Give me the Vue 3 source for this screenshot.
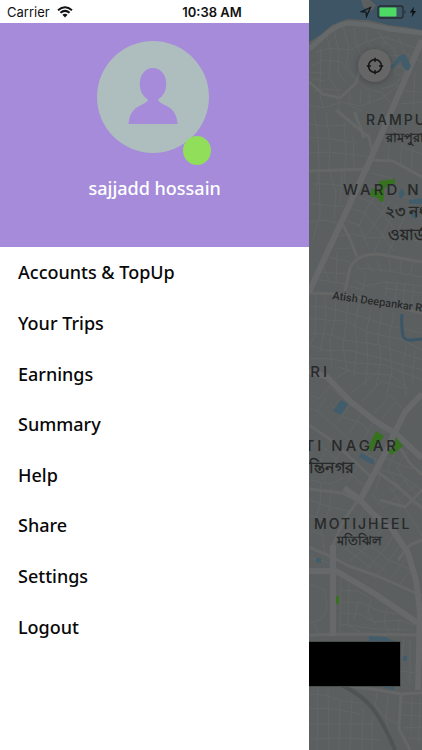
<script setup>
const user = { name: 'sajjadd hossain' }

const menu = ['Accounts & TopUp', 'Your Trips', 'Earnings', 'Summary', 'Help', 'Share', 'Settings', 'Logout']

const highways = [
  'M422 40 L371 158 L309 292',
  'M309 371 L327 377 L350 401 L375 421 L395 433 L422 458',
  'M422 394 L405 412 L395 432 L388 448 L360 500',
  'M344 488 L359 499 L372 513 L392 529 L408 553 L416 580 L420 612',
  'M333 545 L333 636',
  'M309 571 L336 571 L375 594 L422 626',
  'M420 612 L418 690'
]

const roads = [
  'M372 160 L393 161 L422 177',
  'M309 425 L331 440 L352 459 L371 477',
  'M359 499 L344 520 L333 545',
  'M340 685 L372 689 L401 694 L422 693',
  'M401 694 L399 729 L410 750',
  'M309 171 L337 170 L370 169',
  'M309 293 L336 294 L362 298 L422 313',
  'M345 291 L350 268 Q356 254 378 254 L422 262',
  'M336 110 L360 130 L369 137 L373 155',
  'M357 120 L355 113 L364 138',
  'M342 223 L350 239 L357 257',
  'M309 82 L323 94 L340 98 L356 83 L360 70',
  'M309 547 L332 557 L349 566 L380 577 L422 596',
  'M309 635 L350 634 L417 635',
  'M309 489 L342 493 L370 507',
  'M375 470 L398 487 L422 508',
  'M380 500 L405 507 L422 490',
  'M398 560 L410 545 L422 540',
  'M395 440 L409 462 L422 475'
]

const streets = [
  'M316 52 L330 48 L350 50 L366 42 L384 37 L400 42 L422 51',
  'M311 66 L324 60 L342 62 L348 72 L366 88 L382 93 L392 104',
  'M326 34 L331 52 L329 77 L338 92 L340 115',
  'M334 30 L339 53 L338 73 L347 83',
  'M343 26 L349 48 L346 65 L354 76',
  'M354 27 L356 43 L363 61',
  'M366 28 L367 41 L377 54 L400 56 L411 74',
  'M377 30 L385 42 L393 48 L399 61',
  'M389 35 L382 48 L370 51',
  'M399 38 L405 54 L422 62',
  'M309 72 L325 73 M309 78 L325 81 M313 92 L326 89 L341 90',
  'M309 105 L323 108 L342 102 L360 106 L382 98 L401 84',
  'M321 47 L320 94 L323 108',
  'M350 86 L349 105 L362 111',
  'M361 89 L360 104 M369 91 L370 105',
  'M387 61 L405 70 L397 84 L382 89',
  'M405 55 L394 72 L405 79',
  'M415 71 L413 110 M422 92 L404 91 M422 102 L399 104',
  'M314 114 L318 136 L319 168 L316 190',
  'M326 112 L330 144 L329 169 L336 192 L334 221',
  'M309 124 L325 126 L348 125 M309 137 L331 139 L357 143',
  'M309 153 L328 152 L359 155 L371 157',
  'M344 121 L346 153 L344 181 L350 193',
  'M353 136 L354 169',
  'M309 184 L330 184 L349 187 M309 203 L334 206 L344 206',
  'M319 170 L320 214 L313 239 M342 171 L340 204',
  'M309 222 L325 220 L337 223',
  'M376 122 L391 125 L399 139 L422 143',
  'M380 133 L389 147 L388 161 M393 128 L405 148 L422 154',
  'M402 143 L400 165 M413 146 L411 170',
  'M371 173 L391 178 L397 194 L422 202',
  'M362 183 L383 191 L383 205 L400 219',
  'M355 196 L371 202 L384 215 L401 239',
  'M350 208 L365 213 L378 230 L394 251',
  'M344 220 L359 225 L369 249',
  'M378 192 L367 207 L359 226 M390 201 L376 222 L363 240',
  'M397 205 L387 226 L374 252 M411 203 L398 231 L388 254',
  'M339 236 L352 234 L371 238 L398 236 L422 242',
  'M335 249 L351 248 M329 257 L350 262 M320 272 L349 274',
  'M323 265 L330 283 M337 251 L336 283 M316 279 L349 285',
  'M357 266 L366 274 L363 290 L345 285',
  'M355 281 L365 286 L385 282 L422 286',
  'M367 263 L373 273 M377 260 L382 273 M389 259 L391 272 M401 260 L401 273 M413 262 L410 275',
  'M360 268 Q377 269 394 272 L422 277',
  'M384 288 L422 293 M388 281 L385 296 M397 282 L395 300 M405 283 L403 304 M414 284 L412 306',
  'M309 306 L325 307 L356 315 L390 326 L422 333',
  'M309 318 L326 320 L345 321 L370 333 L401 339 L422 350',
  'M316 295 L315 335 L309 348 M325 297 L326 321 L320 352',
  'M336 299 L335 319 L330 340 L332 368',
  'M348 301 L346 323 L343 346 L347 371',
  'M359 304 L355 325 L357 347 L354 378',
  'M371 308 L366 334 L368 361 L365 386',
  'M382 310 L378 336 L381 357 L376 387',
  'M394 313 L389 337 L392 372 L386 398',
  'M407 346 L402 367 L406 397 M415 351 L412 382',
  'M309 333 L329 334 L345 340 L379 345 L422 360',
  'M309 345 L328 351 L346 350 L369 355 L422 370',
  'M309 358 L330 359 L355 363 L384 365 L422 380',
  'M338 367 L357 373 L391 375 L409 390',
  'M335 379 L350 369 M351 393 L377 372 M361 402 L382 381 L402 388',
  'M331 388 L351 405 L370 420 L386 433',
  'M327 396 L317 411 L309 408 M317 411 L334 425 L358 448 L378 461',
  'M330 403 L344 417 L361 423 L378 441',
  'M350 405 L338 421 M361 414 L349 434 M372 424 L361 445',
  'M374 413 L391 395 L404 410 M382 418 L397 401',
  'M309 394 L319 399 L334 381 M309 439 L326 449 L320 462 L309 468',
  'M326 449 L343 468 L364 485 M342 449 L333 466 L321 480',
  'M358 466 L347 482 M369 456 L382 468 L376 490',
  'M398 445 L388 468 L397 485 M407 451 L397 467 L408 486',
  'M386 458 L404 466 L422 471 M382 470 L402 476 L422 490',
  'M309 480 L331 484 L343 478 M309 500 L334 508 L350 511',
  'M309 515 L324 520 L341 520 M321 482 L320 505 L314 525',
  'M332 487 L329 509 L321 532 L325 552',
  'M366 505 L357 524 L341 536 M375 513 L366 532 L343 551',
  'M386 523 L375 540 L349 561 M395 533 L385 549 L363 572',
  'M402 542 L390 559 L374 578 M408 554 L396 572 L386 583',
  'M412 569 L400 584 M347 530 L369 544 L389 560 L414 571',
  'M343 539 L365 554 L386 572 M346 549 L371 568',
  'M371 493 L383 508 L395 498 L403 507 L391 520',
  'M389 486 L403 505 L417 527 L422 536',
  'M397 484 L415 506 M405 481 L422 501 M391 492 L409 478 M398 501 L417 484',
  'M310 530 L325 536 M310 558 L325 561 L334 569',
  'M310 584 L325 590 L327 608 Q324 623 309 622',
  'M341 575 L340 633 M349 583 L348 625 L362 633',
  'M340 590 L358 591 L371 599 M340 602 L362 603 L380 611 L398 614',
  'M341 613 L359 614 L374 622 L401 620 L414 626',
  'M341 624 L376 629 L413 630 M371 599 L368 612 L376 625',
  'M387 608 L384 622 L390 634 M399 619 L398 633',
  'M358 602 L354 620 M314 623 L318 635',
  'M309 694 L325 695 L342 701 L362 703 M309 708 L333 709 L360 714',
  'M309 724 L337 724 L374 724 M309 739 L342 738 L380 740',
  'M318 687 L317 750 M328 689 L329 750 M340 699 L339 750',
  'M352 697 L350 750 M363 707 L362 750 M372 717 L372 750',
  'M377 693 L375 706 L386 718 L400 725 M388 695 L386 718 L394 750',
  'M403 702 L422 704 M401 715 L422 716 M403 728 L422 727 M409 738 L422 739',
  'M412 697 L411 732 M420 697 L419 745',
  'M404 638 L402 657 M410 638 L410 684 M401 671 L415 673'
]
</script>

<template>
  <div class="app">
    <header class="status">
      <div class="status-left">
        <span>Carrier</span>
        <svg class="wifi" viewBox="0 0 16 12" aria-hidden="true">
          <path d="M1 4.2Q8-1.6 15 4.2" />
          <path d="M3.4 6.8Q8 3 12.6 6.8" />
          <path class="solid" d="M5.4 8.8Q8 6.7 10.6 8.8L8 11.6Z" />
        </svg>
      </div>
      <time>10:38 AM</time>
      <div class="status-right">
        <svg class="arrow" viewBox="0 0 12 12" aria-hidden="true"><path d="M1.5 5.7L10.4 1.5L6.5 10.5L6 6.2Z" /></svg>
        <svg class="battery" viewBox="0 0 30 14" aria-hidden="true">
          <rect class="shell" x="1" y="1" width="25" height="12" rx="2.5" />
          <rect class="charge" x="2.5" y="2.5" width="17" height="9" rx="1" />
          <path class="tip" d="M27.5 5Q29.5 7 27.5 9Z" />
        </svg>
        <svg class="bolt" viewBox="0 0 8 12" aria-hidden="true"><path d="M5 .8L.8 6.5H3.5L2.6 11.2L7.2 5H4.4Z" /></svg>
      </div>
    </header>

    <aside class="drawer">
      <section class="profile">
        <div class="avatar">
          <svg viewBox="0 0 112 112" aria-hidden="true">
            <circle class="disc" cx="56" cy="56" r="56" />
            <path class="person" d="M56 27C64 27 69.200 34 69.200 43C69.200 50 66 55.500 61 58.500C61 61 66 63 70.500 65.500C78 69.500 80 76 80.500 83H31.500C32 76 34 69.500 41.500 65.500C46 63 51 61 51 58.500C46 55.500 42.800 50 42.800 43C42.800 34 48 27 56 27Z" />
          </svg>
          <span class="presence"></span>
        </div>
        <h1>{{ user.name }}</h1>
      </section>
      <nav class="menu">
        <a v-for="item in menu" :key="item" href="#">{{ item }}</a>
      </nav>
    </aside>

    <main class="map">
      <svg class="tiles" viewBox="309 0 113 750" preserveAspectRatio="xMinYMin slice">
        <rect class="land" x="309" y="0" width="600" height="1200" />
        <g class="streets"><path v-for="d in streets" :key="d" :d="d" /></g>
        <g class="roads"><path v-for="d in roads" :key="d" :d="d" /></g>
        <g class="highways"><path v-for="d in highways" :key="d" :d="d" /></g>
        <path class="rail" d="M341 685Q365 696 376 713T395 750" />
        <path class="water" d="M309 0H422V30L405 27L389 25L369 20L347 19L332 25L320 35L309 42Z" />
        <path class="land" d="M361 0H370L376 5L373 10L369 11L363 7Z" />
        <path class="shore" d="M309 49L322 38Q336 24 349 23L370 25L389 29L422 33" />
        <path class="lake" d="M391 66L399 56L405 54L408 60L411 66L408 71L404 68L401 61L397 65L391 69Z" />
        <path class="lake" d="M402 188L405 194L401 199L398 194ZM409 200L422 198V204H409ZM411 211L417 213L416 219L411 216Z" />
        <path class="canal" d="M402 314Q401 326 403 336Q405 341 412 340L422 339" />
        <path class="lake" d="M341 400L348 404L341 415L333 411ZM361 453L374 460V465L359 457ZM316 558H321V563L316 562ZM369 636L385 637L397 642H369ZM403 656H407V661H403ZM384 685H394V690L385 688Z" />
        <path class="park" d="M379 181L395 179V184L389 185L384 189V201L380 202L378 198L370 196L372 188L380 190Z" />
        <path class="park" d="M376 431L384 436L379 443L375 445L371 452L368 447ZM396 437L403 446L397 451L391 455L388 451L394 447ZM336 596H339V604H336Z" />
        <g class="labels">
          <text class="district" x="366" y="125">RAMPURA</text>
          <text class="bangla" x="386" y="142">রামপুরা</text>
          <text class="area" x="343" y="195">WARD NO</text>
          <text class="bangla big" x="385" y="217">২৩ নং</text>
          <text class="bangla big" x="388" y="240">ওয়ার্ড</text>
          <text class="road-name" x="332" y="299" transform="rotate(8 332 299)">Atish Deepankar Rd</text>
          <text class="area" x="330" y="377" text-anchor="end">GORI</text>
          <text class="area" x="399" y="451" text-anchor="end">SHANTI NAGAR</text>
          <text class="bangla big" x="354" y="473" text-anchor="end">শান্তিনগর</text>
          <text class="district" x="314" y="529">MOTIJHEEL</text>
          <text class="bangla" x="337" y="545">মতিঝিল</text>
        </g>
      </svg>
      <button class="locate" type="button" aria-label="Center on my location">
        <svg viewBox="0 0 18 18" aria-hidden="true">
          <circle cx="9" cy="9" r="6.500" />
          <path d="M9 .8V5M9 13V17.200M.8 9H5M13 9H17.200" />
        </svg>
      </button>
      <div class="action-bar"></div>
    </main>
  </div>
</template>

<style>
body {
  margin: 0;
}
</style>

<style scoped>
.app {
  position: relative;
  display: flex;
  min-height: 100vh;
  overflow: hidden;
  background: #fff;
  font-family: "Noto Sans", "Open Sans", sans-serif;
}

.status {
  position: absolute;
  z-index: 2;
  inset: 0 0 auto;
  display: grid;
  grid-template-columns: 1fr auto 1fr;
  align-items: center;
  height: 24px;
  padding: 0 5px 0 7px;
  color: #111;
  font: 500 13px/24px Inter, sans-serif;
}

.status time {
  font-weight: 600;
}

.status-left,
.status-right {
  display: flex;
  align-items: center;
  gap: 7px;
}

.status-left {
  font-weight: 400;
}

.status-right {
  justify-content: flex-end;
  gap: 5px;
}

.wifi {
  width: 16px;
  height: 12px;
  fill: none;
  stroke: #111;
  stroke-width: 2;
}

.wifi .solid {
  fill: #111;
  stroke: none;
}

.arrow {
  width: 12px;
  height: 12px;
  fill: none;
  stroke: #15191b;
  stroke-width: 1.3;
}

.battery {
  width: 30px;
  height: 14px;
}

.shell {
  fill: none;
  stroke: #252d33;
  stroke-width: 1.3;
}

.charge {
  fill: #4cd964;
}

.tip {
  fill: #252d33;
}

.bolt {
  width: 8px;
  height: 12px;
  margin-left: -3px;
  fill: #101316;
}

.drawer {
  flex: 0 0 73.3%;
  box-sizing: border-box;
  padding-top: 23px;
  background: #fff;
}

.profile {
  display: flex;
  flex-direction: column;
  align-items: center;
  box-sizing: border-box;
  min-height: 224px;
  padding: 18px 4px 0 0;
  background: #a58bda;
}

.avatar {
  position: relative;
  width: 112px;
  height: 112px;
}

.avatar svg {
  display: block;
}

.disc {
  fill: #aebdbd;
}

.person {
  fill: #a58bda;
}

.presence {
  position: absolute;
  right: -2px;
  bottom: -12px;
  width: 28px;
  height: 29px;
  border-radius: 50%;
  background: #90de5a;
}

h1 {
  margin: 23px 0 0 4px;
  color: #fff;
  font-size: 18px;
  font-weight: 500;
  line-height: 24px;
}

.menu {
  display: grid;
  grid-auto-rows: 1fr;
  min-height: 405px;
}

.menu a {
  display: flex;
  align-items: center;
  padding: 0 18px;
  color: #080808;
  font-size: 18px;
  font-weight: 500;
  text-decoration: none;
}

.map {
  position: relative;
  flex: 1;
  min-width: 0;
  background: #5b5f5f;
}

.tiles {
  position: absolute;
  width: 100%;
  height: 100%;
}

.land {
  fill: #5b5f5f;
}

.water {
  fill: #3d5564;
}

.lake {
  fill: #415d6c;
}

.park {
  fill: #36721f;
}

.canal {
  fill: none;
  stroke: #3b5666;
  stroke-width: 3;
}

.streets,
.roads,
.highways,
.shore,
.rail {
  fill: none;
  stroke: #636666;
  stroke-linejoin: round;
}

.streets {
  stroke-width: 1;
}

.roads {
  stroke: #656767;
  stroke-width: 3;
}

.highways {
  stroke: #666869;
  stroke-width: 6;
}

.shore {
  stroke: #666969;
  stroke-width: 5;
}

.rail {
  stroke: #505353;
  stroke-width: 4;
}

.labels {
  fill: #27292a;
  font-family: Inter, "Noto Sans", sans-serif;
  font-weight: 500;
}

.district {
  font-size: 14px;
  letter-spacing: 2px;
}

.area {
  font-size: 15px;
  letter-spacing: 3px;
}

.road-name {
  font-family: Roboto, sans-serif;
  font-size: 11px;
}

.bangla {
  font-size: 13px;
  font-weight: 600;
}

.bangla.big {
  font-size: 16px;
}

.locate {
  position: absolute;
  top: 49px;
  right: 31px;
  display: grid;
  place-items: center;
  width: 33px;
  height: 33px;
  padding: 0;
  border: 0;
  border-radius: 50%;
  background: #666;
  box-shadow: 0 1px 6px rgb(0 0 0 / 25%);
}

.locate svg {
  width: 18px;
  height: 18px;
  fill: none;
  stroke: #151515;
  stroke-width: 1.5;
}

.action-bar {
  position: absolute;
  right: 21px;
  bottom: 63px;
  left: 0;
  height: 44px;
  border: 1px solid #4b4e4e;
  border-left: 0;
  box-sizing: content-box;
  background: #000;
}
</style>
